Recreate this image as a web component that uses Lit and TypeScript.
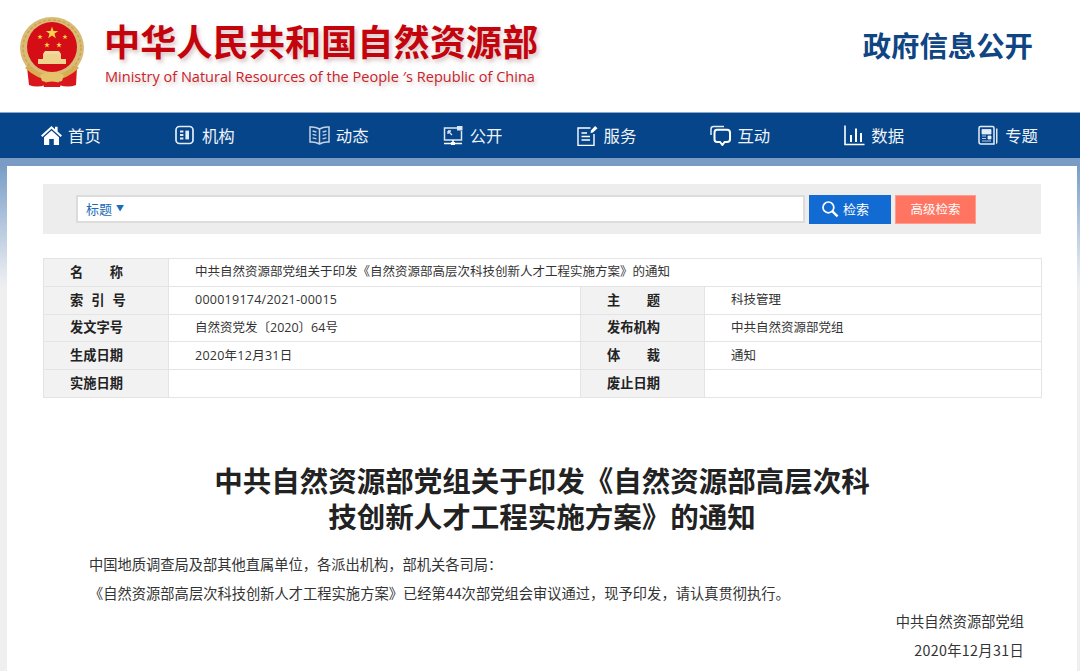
import { LitElement, html, css, svg } from "lit";
import { customElement } from "lit/decorators.js";

const star = (cx: number, cy: number, r: number, fill = "#f6d34a") => {
  const pts: string[] = [];
  for (let i = 0; i < 10; i++) {
    const rr = i % 2 ? r * 0.4 : r;
    const a = -Math.PI / 2 + (i * Math.PI) / 5;
    pts.push(`${(cx + rr * Math.cos(a)).toFixed(2)},${(cy + rr * Math.sin(a)).toFixed(2)}`);
  }
  return svg`<polygon points=${pts.join(" ")} fill=${fill}></polygon>`;
};

const emblem = html`<svg class="emblem" viewBox="0 0 68 76" width="68" height="76">
  <defs><filter id="b" x="-10%" y="-10%" width="120%" height="120%"><feGaussianBlur stdDeviation="0.5"></feGaussianBlur></filter></defs>
  <g filter="url(#b)">
    <path d="M9 52 L11 70 Q19 73 27 70 L29 62Z M59 52 L58 70 Q50 73 41 70 L39 62Z" fill="#d8141c"></path>
    <ellipse cx="34" cy="33" rx="32" ry="31" fill="#d9bb78"></ellipse>
    <ellipse cx="34" cy="33" rx="29" ry="28" fill="none" stroke="#c9a24f" stroke-width="1.4" stroke-dasharray="3 2"></ellipse>
    <circle cx="34" cy="32" r="25" fill="#d50d14"></circle>
    ${star(34, 18, 6.5)}
    ${star(22, 22, 2.8)}${star(47, 22, 2.8)}${star(29, 30, 3)}${star(41, 30, 3)}
    <path d="M20 44 H48 V49 H20Z M25 39 H43 V44 H25Z" fill="#eed48e"></path>
    <path d="M27 36 H41 L43 39 H25Z" fill="#f1dc9d"></path>
    <path d="M10 50 Q34 70 58 50 L61 53 Q34 78 7 53Z" fill="#d8ac52"></path>
    <path d="M22 60 Q34 54 46 60 L44 66 Q34 69 24 66Z" fill="#e6c36b"></path>
    <path d="M25 68 Q34 65 43 68 L42 72 H26Z" fill="#d8141c"></path>
  </g>
</svg>`;

const icons: Record<string, unknown> = {
  home: svg`<path d="M10.5 1 L14 4.2 V1.8 H16.6 V6.6 L21 10.6 L19.6 12 L10.5 3.8 L1.4 12 L0 10.6Z" fill="#fff"></path><path d="M10.5 5.6 L18 12.2 V20 H12.8 V14 H8.2 V20 H3 V12.2Z" fill="#fff"></path>`,
  org: svg`<rect x="1" y="1.5" width="17" height="17" rx="3.5" fill="none" stroke="#e4edf6" stroke-width="1.7"></rect><path d="M5 5.6 H8.4 V7.6 H5Z M5 9 H8.4 V11 H5Z M5 12.4 H8.4 V14.4 H5Z" fill="#e4edf6"></path><rect x="10.4" y="5.6" width="3.6" height="8.8" fill="#e4edf6"></rect>`,
  book: svg`<path d="M10.5 4 Q6 1.4 1 2 V17 Q6 16.4 10.5 19 Q15 16.4 20 17 V2 Q15 1.4 10.5 4Z M10.5 4 V19" fill="none" stroke="#c4d3e4" stroke-width="1.5"></path><path d="M3.6 6 L7.4 7 M3.6 9.4 L7.4 10.4 M3.6 12.8 L7.4 13.8 M17.4 6 L13.6 7 M17.4 9.4 L13.6 10.4 M17.4 12.8 L13.6 13.8" stroke="#c4d3e4" stroke-width="1.3"></path>`,
  open: svg`<path d="M14 3 H1.5 V15 H18.5 V6" fill="none" stroke="#dce7f2" stroke-width="1.5"></path><path d="M14 1 H19.5 V5.5 H14Z" fill="#dce7f2"></path><path d="M5 6 L9 10 M5 6 H8 M5 6 V9" stroke="#dce7f2" stroke-width="1.3" fill="none"></path><path d="M10 15 V18 M1 18.5 H19" stroke="#fff" stroke-width="1.6"></path><rect x="8" y="17" width="4" height="3" fill="#fff"></rect>`,
  service: svg`<path d="M13.5 3 H1 V20.5 H17 V9" fill="none" stroke="#fff" stroke-width="1.4"></path><path d="M4.5 8 H10 M4.5 11.5 H13 M4.5 15 H13" stroke="#fff" stroke-width="1.6"></path><path d="M14 5.5 L18 1 L20.5 3.2 L16 7.6 L13.6 8Z" fill="#fff"></path>`,
  chat: svg`<path d="M1 10 V4 Q1 1.5 3.5 1.5 H14" fill="none" stroke="#e4edf6" stroke-width="1.5"></path><path d="M7 4.8 H17 Q20 4.8 20 7.8 V14.2 Q20 17 17 17 H14.6 L12.4 20 L10 17 H7 Q4.5 17 4.5 14.2 V7.8 Q4.5 4.8 7 4.8Z" fill="none" stroke="#fff" stroke-width="2"></path>`,
  chart: svg`<path d="M1 0.5 V19.5 H20.5" fill="none" stroke="#fff" stroke-width="1.6"></path><path d="M6 10 H8 V17 H6Z M11 3.5 H13 V17 H11Z M16 8 H18 V17 H16Z" fill="#fff"></path>`,
  news: svg`<path d="M2.5 1.5 H14.5 Q16 1.5 16 3 V19 H3 Q1 19 1 17 V3 Q1 1.5 2.5 1.5Z" fill="none" stroke="#e4edf6" stroke-width="1.5"></path><path d="M4 4.5 H13 V9 H4Z M4 11 H8 M4 13.5 H8 M4 16 H13 M10 11 H13 V14 H10Z" fill="#e4edf6" stroke="#e4edf6" stroke-width=".8"></path><path d="M18 3.5 H19.5 V17 Q19.5 19 18 19Z" fill="#dce7f2"></path>`,
};

const NAV: [string, string][] = [
  ["home", "首页"],
  ["org", "机构"],
  ["book", "动态"],
  ["open", "公开"],
  ["service", "服务"],
  ["chat", "互动"],
  ["chart", "数据"],
  ["news", "专题"],
];

@customElement("app-root")
export class AppRoot extends LitElement {
  static styles = css`
    :host { display: block; width: 1080px; height: 671px; overflow: hidden; background: #fff; font-family: "Noto Sans CJK SC", "Noto Sans", sans-serif; color: #333; }
    .header { height: 112px; display: flex; align-items: flex-start; background: #fff; }
    .emblem { margin: 15px 0 0 18px; flex: none; }
    .brand { margin: 15px 0 0 18px; width: 440px; flex: none; }
    .cn { font-size: 36.2px; line-height: 50px; font-weight: 700; color: #c4040c; text-shadow: 2px 3px 4px rgba(120,60,60,.3); white-space: nowrap; }
    .en { font: 14.55px/20px "Open Sans", sans-serif; color: #c8232a; text-shadow: 2px 3px 4px rgba(120,60,60,.3); white-space: nowrap; margin: 1px 0 0 1px; }
    .gov { margin: 25px 0 0 auto; padding-right: 47px; font-size: 28.4px; line-height: 40px; font-weight: 700; color: #0f4583; white-space: nowrap; }
    .nav { height: 45px; border-top: 1px solid #8aa9cc; background: #064589; display: grid; grid-template-columns: repeat(8, 133.9px); padding-left: 41px; }
    .item { display: flex; align-items: center; gap: 6px; color: #eef3f9; font-size: 16.4px; white-space: nowrap; }
    .item svg { flex: none; }
    .item span { padding-bottom: 2px; }
    .page { height: 513px; background: linear-gradient(#7a9cc4 0, #7a9cc4 8px, #7fa3ca 15px, #dfe5ee 110px, #efefef 130px); padding: 8px 3px 0 7px; box-sizing: border-box; }
    .sheet { background: #fff; height: 100%; padding: 18px 36px 0; box-sizing: border-box; }
    .search { height: 50px; width: 998px; background: #ededed; display: flex; align-items: center; padding-left: 33px; box-sizing: border-box; }
    .box { width: 729px; height: 28px; background: #fff; border: 2px solid #dcdcdc; box-sizing: border-box; display: flex; align-items: center; padding: 0 0 2px 8px; font-size: 13px; color: #1a6bb8; gap: 4px; }
    .caret { font-size: 8px; line-height: 1; }
    .btn { height: 29px; display: flex; align-items: center; font-size: 13px; color: #fff; box-sizing: border-box; }
    .btn span { padding-bottom: 2px; }
    .go { width: 82px; margin-left: 4px; background: #126bd3; padding-left: 12px; gap: 4px; }
    .adv { width: 81px; margin-left: 4px; background: #ff7561; border: 1px solid #ff9c8c; justify-content: center; font-size: 12.5px; }
    table { width: 998px; margin-top: 24px; border-collapse: collapse; table-layout: fixed; font-family: "Open Sans", "Noto Sans CJK SC", sans-serif; font-size: 12.5px; color: #333; }
    td { border: 1px solid #e4e4e4; height: 27.8px; padding: 0; box-sizing: border-box; line-height: 1; }
    td.k { background: #f2f2f2; border-right: 0; font-family: "Noto Sans CJK SC", sans-serif; font-weight: 700; font-size: 13.25px; color: #222; padding: 0 0 2px 26px; }
    td.v { padding-left: 26px; }
    .num { letter-spacing: .25px; }
    .w2 { letter-spacing: 2em; }
    .w3 { letter-spacing: .6em; }
    h1 { width: 680px; margin: 64px auto 0; text-align: center; font-size: 28.5px; line-height: 36px; font-weight: 700; color: #222; }
    .body { font-size: 14.25px; line-height: 28.7px; color: #333; padding: 0 17px 0 46px; }
    .body p { margin: 0; }
    .body .first { margin-top: 16px; }
    .body .long { letter-spacing: .02px; }
    .sign { text-align: right; }
    .date { letter-spacing: .35px; }
  `;

  render() {
    return html`
      <div class="header">
        ${emblem}
        <div class="brand">
          <div class="cn">中华人民共和国自然资源部</div>
          <div class="en">Ministry of Natural Resources of the People ′s Republic of China</div>
        </div>
        <div class="gov">政府信息公开</div>
      </div>
      <nav class="nav">
        ${NAV.map(
          ([i, t]) => html`<div class="item"><svg width="21" height="21" viewBox="0 0 21 21">${icons[i]}</svg><span>${t}</span></div>`
        )}
      </nav>
      <div class="page">
        <div class="sheet">
          <div class="search">
            <div class="box"><span>标题</span><span class="caret">▼</span></div>
            <div class="btn go">
              <svg width="18" height="18" viewBox="0 0 18 18"><circle cx="7.4" cy="7.4" r="5.4" fill="none" stroke="#fff" stroke-width="1.7"></circle><path d="M11.4 11.4 L16.6 16.4" stroke="#fff" stroke-width="2.4"></path></svg>
              <span>检索</span>
            </div>
            <div class="btn adv"><span>高级检索</span></div>
          </div>
          <table>
            <colgroup><col style="width:125px" /><col style="width:412px" /><col style="width:124px" /><col style="width:337px" /></colgroup>
            <tr><td class="k"><span class="w2">名</span>称</td><td class="v" colspan="3">中共自然资源部党组关于印发《自然资源部高层次科技创新人才工程实施方案》的通知</td></tr>
            <tr><td class="k"><span class="w3">索引</span>号</td><td class="v num">000019174/2021-00015</td><td class="k"><span class="w2">主</span>题</td><td class="v">科技管理</td></tr>
            <tr><td class="k">发文字号</td><td class="v">自然资党发〔2020〕64号</td><td class="k">发布机构</td><td class="v">中共自然资源部党组</td></tr>
            <tr><td class="k">生成日期</td><td class="v num">2020年12月31日</td><td class="k"><span class="w2">体</span>裁</td><td class="v">通知</td></tr>
            <tr><td class="k">实施日期</td><td class="v"></td><td class="k">废止日期</td><td class="v"></td></tr>
          </table>
          <h1>中共自然资源部党组关于印发《自然资源部高层次科技创新人才工程实施方案》的通知</h1>
          <div class="body">
            <p class="first">中国地质调查局及部其他直属单位，各派出机构，部机关各司局：</p>
            <p class="long">《自然资源部高层次科技创新人才工程实施方案》已经第44次部党组会审议通过，现予印发，请认真贯彻执行。</p>
            <p class="sign">中共自然资源部党组</p>
            <p class="sign date">2020年12月31日</p>
          </div>
        </div>
      </div>
    `;
  }
}
